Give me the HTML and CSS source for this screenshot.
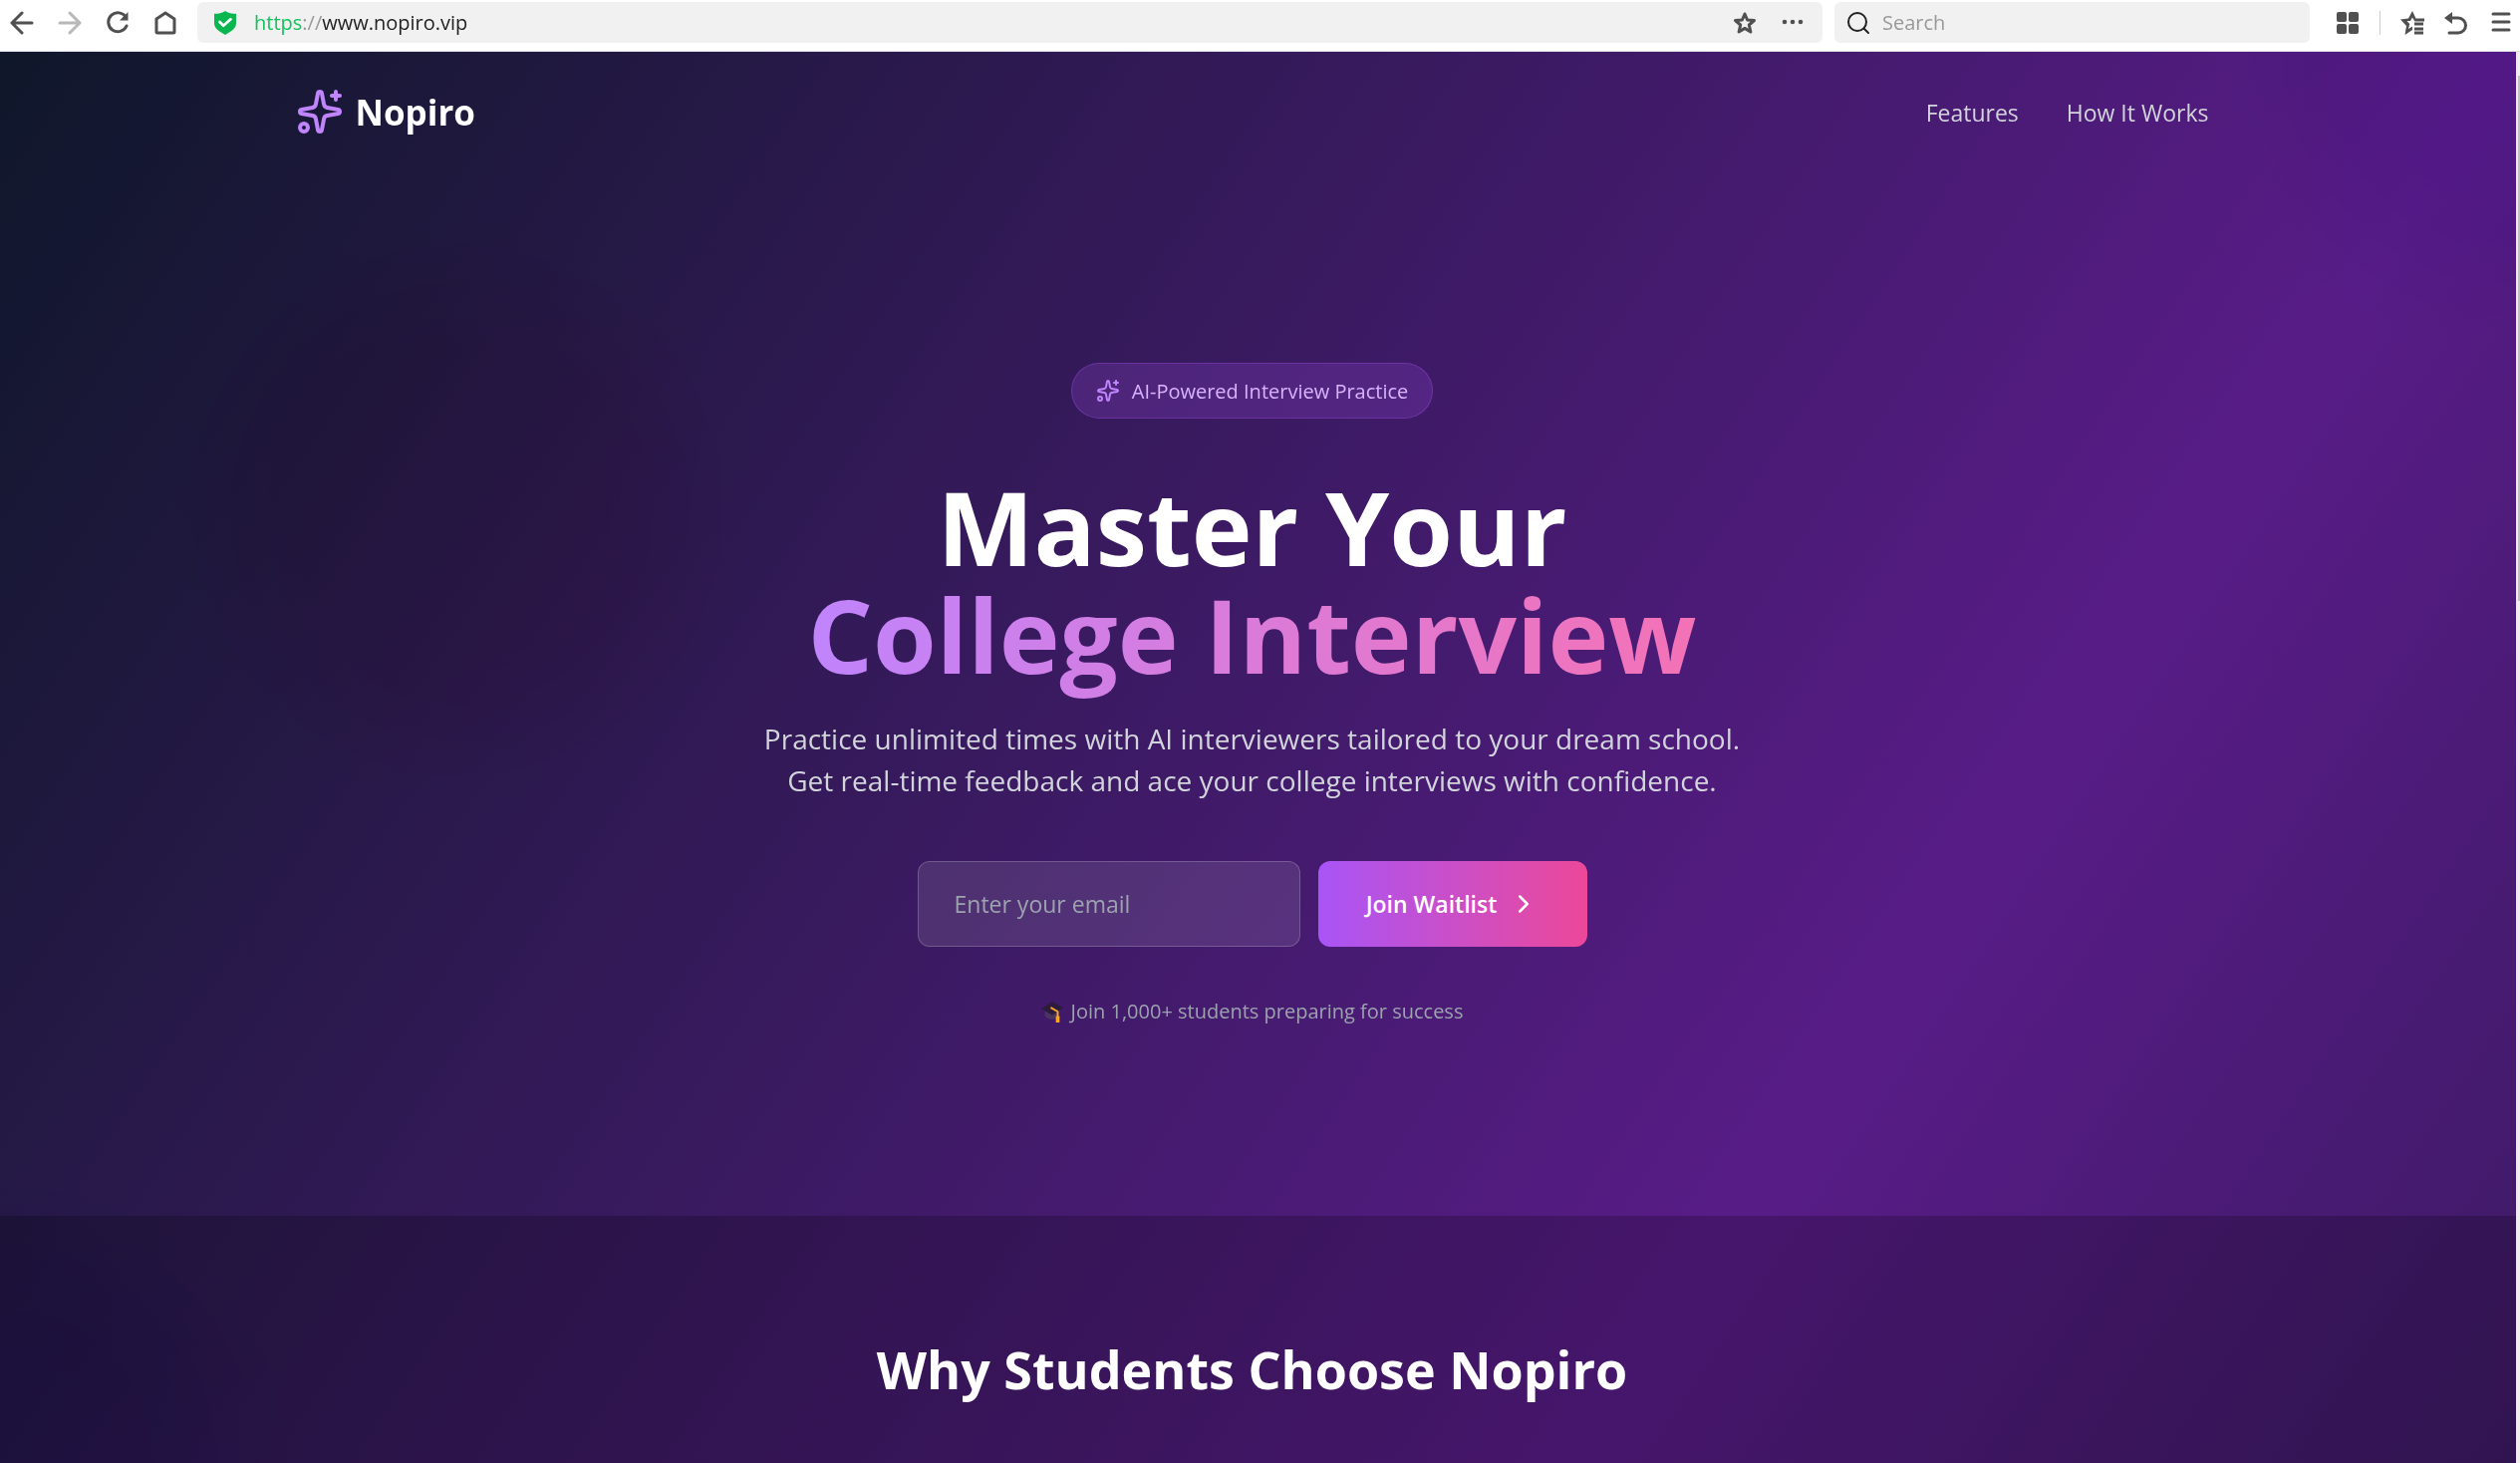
FILE: index.html
```html
<!DOCTYPE html>
<html lang="en">

<head>
    <meta charset="UTF-8">
    <title>Nopiro</title>
    <link rel="stylesheet" href="styles.css">
</head>

<body>
    <!-- Shared icon shapes -->
    <svg class="sprite" aria-hidden="true">
        <symbol id="sparkles" viewBox="0 0 24 24">
            <path d="M11.017 2.814a1 1 0 0 1 1.966 0l1.051 5.558a2 2 0 0 0 1.594 1.594l5.558 1.051a1 1 0 0 1 0 1.966l-5.558 1.051a2 2 0 0 0-1.594 1.594l-1.051 5.558a1 1 0 0 1-1.966 0l-1.051-5.558a2 2 0 0 0-1.594-1.594l-5.558-1.051a1 1 0 0 1 0-1.966l5.558-1.051a2 2 0 0 0 1.594-1.594z" />
            <path d="M20 2v4M22 4h-4" />
            <circle cx="4" cy="20" r="2" />
        </symbol>
    </svg>

    <div class="toolbar">
        <div class="toolbar-nav">
            <button class="tool" aria-label="Back">
                <svg viewBox="0 0 24 24"><path d="M22 12H2M12 2L2 12l10 10" /></svg>
            </button>
            <button class="tool muted" aria-label="Forward">
                <svg viewBox="0 0 24 24"><path d="M2 12h20M12 2l10 10-10 10" /></svg>
            </button>
            <button class="tool" aria-label="Reload">
                <svg viewBox="0 0 24 24"><path d="M20.500 6.500A9.500 9.500 0 1 0 21 15" /><path class="solid" d="M22.500 1v8.500H14z" /></svg>
            </button>
            <button class="tool" aria-label="Home">
                <svg viewBox="0 0 24 24"><path d="M3 8l9-6 9 6v13a1 1 0 0 1-1 1H4a1 1 0 0 1-1-1z" /></svg>
            </button>
        </div>
        <div class="address">
            <svg class="shield" viewBox="0 0 24 26" aria-hidden="true"><path class="shield-bg" d="M12 0c4 2.500 7 3 12 3v10c0 6-5 9-12 13C5 22 0 19 0 13V3c5 0 8-.5 12-3z" /><path class="shield-tick" d="M6 12l4 4 8-7" /></svg>
            <span class="url"><span class="scheme">https</span><span class="slashes">://</span>www.nopiro.vip</span>
            <button class="tool" aria-label="Bookmark">
                <svg viewBox="0 0 24 24"><path d="M12 3l2.600 6 6.900.5-5.200 4.500 1.600 7-5.900-3.600L6.100 21l1.600-7-5.200-4.500L9.400 9z" /></svg>
            </button>
            <button class="tool" aria-label="More">
                <svg viewBox="0 0 24 24"><g class="solid"><circle cx="4" cy="11" r="2.300" /><circle cx="12" cy="11" r="2.300" /><circle cx="20" cy="11" r="2.300" /></g></svg>
            </button>
        </div>
        <label class="search">
            <svg viewBox="0 0 24 24" aria-hidden="true"><circle cx="11" cy="11" r="9" /><path d="M17.500 17.500L22 22" /></svg>
            <input type="text" placeholder="Search" aria-label="Search">
        </label>
        <div class="toolbar-extras">
            <button class="tool" aria-label="Apps">
                <svg viewBox="0 0 24 24"><g class="solid"><rect x="1" y="1" width="10" height="10" rx="2" /><rect x="13" y="1" width="10" height="10" rx="2" /><rect x="1" y="13" width="10" height="10" rx="2" /><rect x="13" y="13" width="10" height="10" rx="2" /></g></svg>
            </button>
            <span class="divider"></span>
            <button class="tool" aria-label="Favorites">
                <svg viewBox="0 0 24 24"><path class="solid" d="M12 0l3.500 7.500H24v3h-9.500L12 6.500 10 10H6.500l2.700 3-1.200 5 4-2.500V19l-7.500 5 1.500-9L0 8.500l8-1z" /><path class="lines" d="M14 13h9M14 18h9M14 22h9" /></svg>
            </button>
            <button class="tool" aria-label="Undo">
                <svg viewBox="0 0 24 24"><path d="M4 7h10a7 7 0 0 1 0 15H5" /><path class="solid" d="M8 1v12L0 7z" /></svg>
            </button>
            <button class="tool" aria-label="Menu">
                <svg viewBox="0 0 24 24"><path d="M5 3h16M5 11h16M5 19h16" /></svg>
            </button>
        </div>
    </div>

    <div class="viewport">
        <div class="page">
            <div class="blob blob-purple"></div>
            <div class="blob blob-pink"></div>
            <div class="blob blob-indigo"></div>

            <nav class="navbar">
                <a class="brand" href="#">
                    <svg class="icon"><use href="#sparkles" /></svg>
                    Nopiro
                </a>
                <div class="links">
                    <a href="#features">Features</a>
                    <a href="#how">How It Works</a>
                </div>
            </nav>

            <section class="hero">
                <div class="badge">
                    <svg class="icon"><use href="#sparkles" /></svg>
                    AI-Powered Interview Practice
                </div>
                <h1>Master Your<span class="accent">College Interview</span></h1>
                <p class="lead">Practice unlimited times with AI interviewers tailored to your dream school.<br>Get real-time feedback and ace your college interviews with confidence.</p>
                <form class="waitlist">
                    <input type="email" placeholder="Enter your email" aria-label="Email">
                    <button type="submit">
                        Join Waitlist
                        <svg class="icon" viewBox="0 0 24 24"><path d="m9 18 6-6-6-6" /></svg>
                    </button>
                </form>
                <p class="note">
                    <svg class="cap" viewBox="0 0 24 24" aria-hidden="true">
                        <path fill="#4a3560" d="M4 11v6c3 4 11 5 15 1v-7z" />
                        <path fill="#2c1b3d" d="M12 1l12 7-12 8L0 9z" />
                        <path fill="none" stroke="#f9a825" stroke-width="2" d="M11 8l7 4v7" />
                        <path fill="#f9a825" d="M16 17h4v7h-4z" />
                    </svg>
                    Join 1,000+ students preparing for success
                </p>
            </section>

            <section class="features" id="features">
                <h2>Why Students Choose Nopiro</h2>
            </section>
        </div>
        <div class="scrollbar"></div>
    </div>
</body>

</html>
```

FILE: styles.css
```css
* {
    box-sizing: border-box;
}

body {
    margin: 0;
    height: 100vh;
    display: flex;
    flex-direction: column;
    overflow: hidden;
    font-family: "Open Sans", "Noto Sans", sans-serif;
    background: #fff;
}

svg {
    display: block;
    fill: none;
    stroke: currentColor;
    stroke-width: 2;
    stroke-linecap: round;
    stroke-linejoin: round;
}

button,
input {
    font: inherit;
    border: none;
}

a {
    color: inherit;
    text-decoration: none;
}

.sprite {
    position: absolute;
    width: 0;
    height: 0;
}

/* Browser toolbar */
.toolbar {
    flex: none;
    display: flex;
    align-items: flex-start;
    height: 52px;
    padding: 2px 8px 0 10px;
    border-bottom: 1px solid #dcdde4;
    font-size: 20px;
    color: #505050;
}

.toolbar-nav,
.toolbar-extras {
    display: flex;
    align-items: center;
    height: 41px;
    gap: 24px;
}

.toolbar-nav {
    margin-right: 20px;
}

.tool {
    padding: 0;
    background: none;
    color: inherit;
}

.tool svg {
    width: 24px;
    height: 24px;
    stroke-width: 3;
}

.solid {
    fill: currentColor;
    stroke: none;
}

.lines {
    stroke-linecap: butt;
}

.muted {
    color: #b8b8b8;
}

.address,
.search {
    display: flex;
    align-items: center;
    height: 41px;
    border-radius: 6px;
    background: #f1f1f1;
}

.address {
    flex: 1;
    gap: 24px;
    padding: 0 18px 0 17px;
}

.shield {
    width: 22px;
    height: 24px;
}

.shield-bg {
    fill: #0ab64f;
    stroke: none;
}

.shield-tick {
    stroke: #fff;
    stroke-width: 3;
}

.url {
    flex: 1;
    margin-left: -6px;
    color: #222;
}

.scheme {
    color: #10c45c;
}

.slashes {
    color: #999;
}

.search {
    width: 477px;
    margin: 0 26px 0 12px;
    padding: 0 12px;
    gap: 12px;
    color: #222;
}

.search svg {
    width: 24px;
    height: 24px;
}

.search input {
    flex: 1;
    min-width: 0;
    padding: 0;
    background: none;
}

.search input::placeholder {
    color: #999;
}

.toolbar-extras {
    gap: 20px;
}

.divider {
    width: 1px;
    height: 24px;
    background: #ccc;
}

/* Page */
.viewport {
    flex: 1;
    min-height: 0;
    display: flex;
    background: #efefef;
}

.page {
    position: relative;
    flex: 1;
    overflow: hidden;
    background: linear-gradient(to bottom right, #0f172a, #581c87, #0f172a) 0 0 / 100% 3800px;
}

.blob {
    position: absolute;
    width: 480px;
    height: 480px;
    border-radius: 50%;
    mix-blend-mode: multiply;
    filter: blur(48px);
    opacity: 0.2;
}

.blob-purple {
    top: -240px;
    right: -240px;
    background: #a855f7;
}

.blob-pink {
    top: 220px;
    left: 220px;
    background: #ec4899;
}

.blob-indigo {
    bottom: -240px;
    left: -240px;
    background: #6366f1;
}

.navbar,
.hero,
.features {
    position: relative;
    padding-right: 12px;
}

.navbar {
    display: flex;
    align-items: center;
    justify-content: space-between;
    max-width: 1932px;
    height: 120px;
    margin: 0 auto;
}

.brand {
    display: flex;
    align-items: center;
    gap: 12px;
    font-size: 35px;
    font-weight: 700;
    color: #fff;
}

.brand .icon {
    width: 48px;
    height: 48px;
    color: #c084fc;
}

.links {
    display: flex;
    gap: 48px;
    padding-top: 2px;
    font-size: 23px;
    color: #d1d5db;
}

.hero {
    display: flex;
    flex-direction: column;
    align-items: center;
    height: 1048px;
    padding-top: 192px;
    text-align: center;
}

.badge {
    display: flex;
    align-items: center;
    gap: 12px;
    height: 56px;
    padding: 0 24px;
    border: 1px solid rgba(168, 85, 247, 0.3);
    border-radius: 28px;
    background: rgba(168, 85, 247, 0.2);
    font-size: 20px;
    color: #d8b4fe;
}

.badge .icon {
    width: 24px;
    height: 24px;
    color: #c084fc;
}

h1 {
    margin: 54px 0 12px;
    font-size: 103px;
    line-height: 108px;
    font-weight: 700;
    color: #fff;
}

.accent {
    display: block;
    padding-bottom: 18px;
    background: linear-gradient(to right, #c084fc, #f472b6);
    background-clip: text;
    color: transparent;
}

.lead {
    margin: 0 0 60px;
    font-size: 28px;
    line-height: 42px;
    color: #d1d5db;
}

.waitlist {
    display: flex;
    gap: 18px;
    width: 672px;
    height: 86px;
}

.waitlist input {
    flex: 1;
    min-width: 0;
    padding: 0 36px;
    border: 1px solid rgba(255, 255, 255, 0.2);
    border-radius: 12px;
    background: rgba(255, 255, 255, 0.1);
    font-size: 23px;
    color: #fff;
}

.waitlist input::placeholder {
    color: #9ca3af;
}

.waitlist button {
    display: flex;
    align-items: center;
    justify-content: center;
    gap: 12px;
    width: 270px;
    border-radius: 12px;
    background: linear-gradient(to right, #a855f7, #ec4899);
    font-size: 23px;
    font-weight: 600;
    color: #fff;
}

.waitlist .icon {
    width: 30px;
    height: 30px;
}

.note {
    display: flex;
    align-items: center;
    gap: 8px;
    margin: 50px 0 0;
    font-size: 20px;
    line-height: 30px;
    color: #9ca3af;
}

.cap {
    width: 22px;
    height: 22px;
    stroke: none;
}

.features {
    height: 400px;
    padding-top: 124px;
    background: rgba(0, 0, 0, 0.2);
    text-align: center;
}

h2 {
    margin: 0;
    font-size: 52px;
    line-height: 60px;
    font-weight: 700;
    color: #fff;
}

.scrollbar {
    width: 4px;
    padding: 24px 0 0 2px;
}

.scrollbar::before {
    content: "";
    display: block;
    height: 527px;
    background: #c1c1c1;
}
```
